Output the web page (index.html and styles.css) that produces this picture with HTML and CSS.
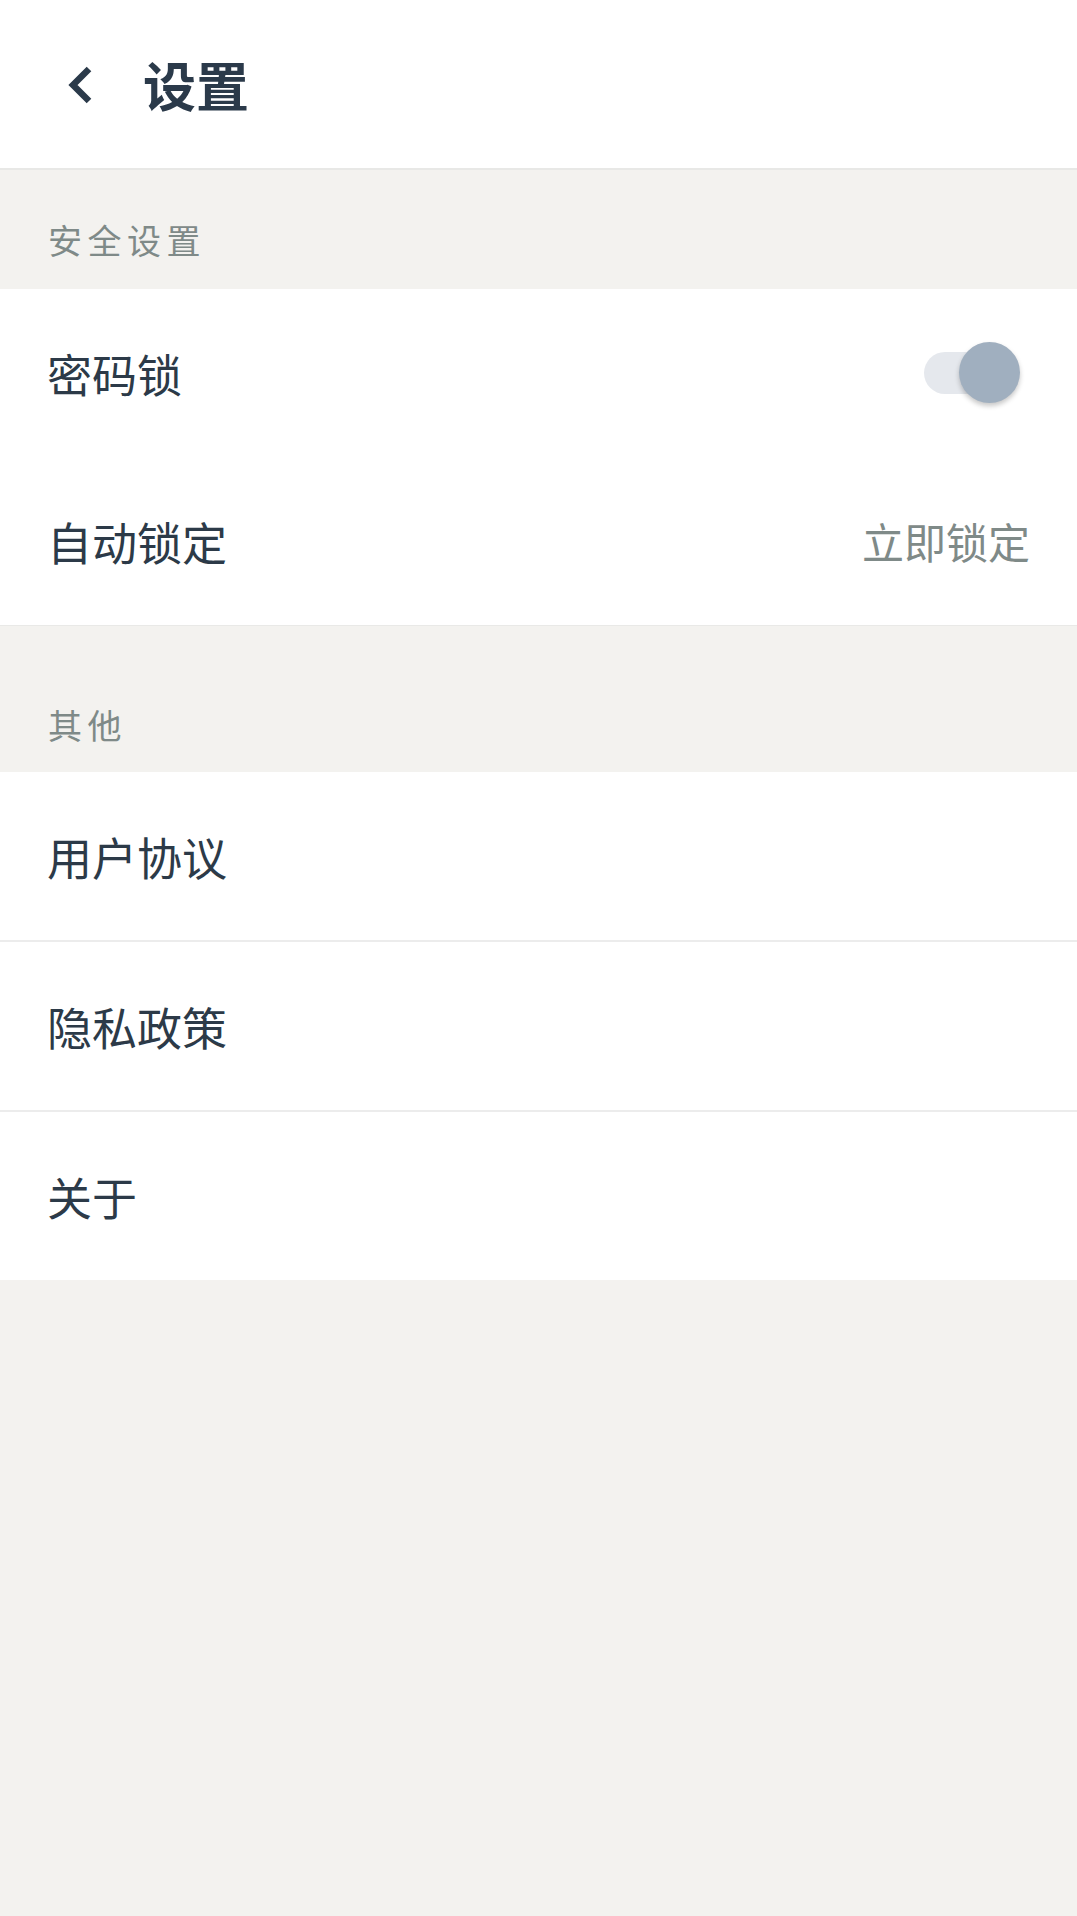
FILE: index.html
```html
<!DOCTYPE html>
<html lang="zh-CN">
<head>
<meta charset="utf-8">
<title>设置</title>
<link rel="stylesheet" href="styles.css">
</head>
<body>
<div class="page">
  <header class="topbar">
    <span class="back" aria-label="返回">
      <svg width="30" height="44" viewBox="0 0 30 44">
        <polyline points="23,6 7,22 23,38" fill="none" stroke="#2b3a4a" stroke-width="6.5" stroke-linecap="butt" stroke-linejoin="miter"/>
      </svg>
    </span>
    <h1 class="title">设置</h1>
  </header>

  <div class="section-label first">安全设置</div>
  <div class="group bordered">
    <div class="row">
      <span class="row-text">密码锁</span>
      <span class="switch"><span class="track"></span><span class="knob"></span></span>
    </div>
    <div class="row">
      <span class="row-text">自动锁定</span>
      <span class="row-value">立即锁定</span>
    </div>
  </div>

  <div class="section-label second">其他</div>
  <div class="group">
    <div class="row divided"><span class="row-text">用户协议</span></div>
    <div class="row divided"><span class="row-text">隐私政策</span></div>
    <div class="row"><span class="row-text">关于</span></div>
  </div>
</div>
</body>
</html>
```

FILE: styles.css
```css
* { box-sizing: border-box; }
html, body {
  margin: 0;
  padding: 0;
  background: #f3f2ef;
  font-family: "Noto Sans CJK SC", "Noto Sans", sans-serif;
}
.page {
  width: 1077px;
  min-height: 1916px;
  background: #f3f2ef;
}
.topbar {
  height: 170px;
  background: #ffffff;
  border-bottom: 2px solid #e8e8e6;
  display: flex;
  align-items: center;
  padding-left: 66px;
}
.back {
  display: flex;
  width: 30px;
  height: 44px;
  margin-top: 2px;
}
.title {
  margin: 0 0 0 47px;
  font-size: 53px;
  line-height: 53px;
  font-weight: 700;
  color: #2b3a4a;
  letter-spacing: 0;
}
.section-label {
  display: flex;
  align-items: flex-end;
  padding-left: 48px;
  font-size: 34px;
  line-height: 34px;
  letter-spacing: 5.5px;
  color: #7f8a88;
}
.section-label.first {
  height: 119px;
  padding-bottom: 32px;
}
.section-label.second {
  height: 146px;
  padding-bottom: 30px;
}
.group {
  background: #ffffff;
}
.group.bordered {
  border-bottom: 1px solid #e9e9e7;
}
.row {
  height: 168px;
  display: flex;
  align-items: center;
  justify-content: space-between;
  padding: 0 47px;
}
.row.divided {
  height: 170px;
  border-bottom: 2px solid #ececec;
}
.row-text {
  font-size: 45px;
  line-height: 45px;
  color: #2c3a48;
}
.row-value {
  font-size: 42px;
  line-height: 42px;
  color: #7f8a88;
}
.switch {
  position: relative;
  width: 96px;
  height: 62px;
  margin-right: 10px;
}
.track {
  position: absolute;
  left: 0;
  top: 10px;
  width: 86px;
  height: 42px;
  border-radius: 21px;
  background: #e5e8ed;
}
.knob {
  position: absolute;
  right: 0;
  top: 0;
  width: 61px;
  height: 61px;
  border-radius: 50%;
  background: #a0afbf;
  box-shadow: 0 3px 5px rgba(0, 0, 0, 0.22);
}
```
